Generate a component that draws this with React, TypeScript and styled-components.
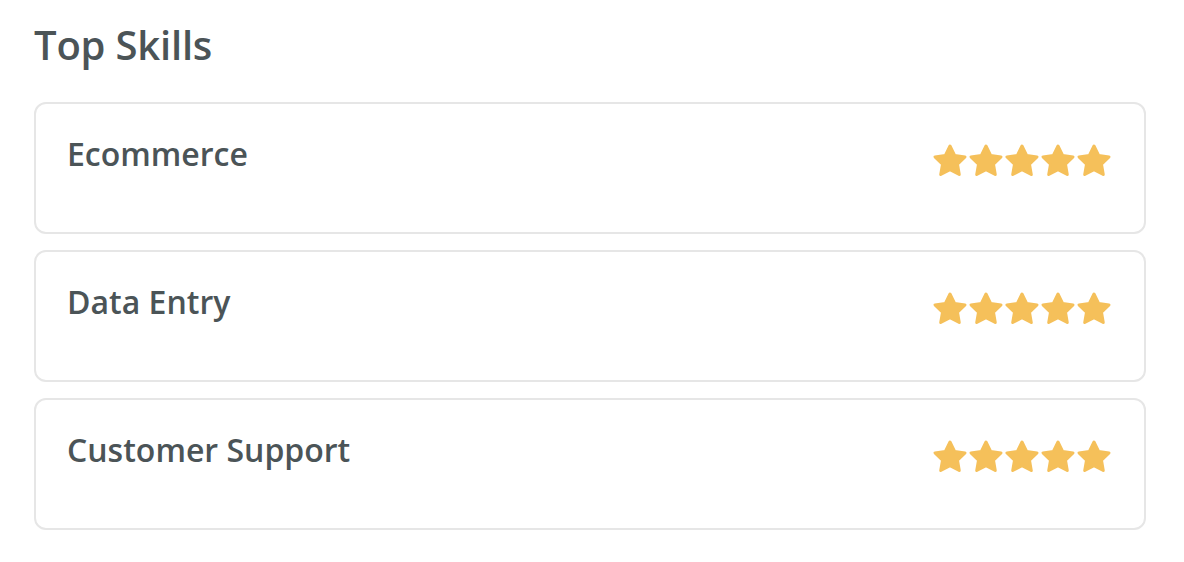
import React from 'react'
import styled, { createGlobalStyle } from 'styled-components'

const GlobalStyle = createGlobalStyle`
  html, body {
    margin: 0;
    padding: 0;
    background: #ffffff;
  }
  body {
    font-family: 'Open Sans', 'Noto Sans', sans-serif;
  }
`

const Section = styled.section`
  padding: 17px 38px 20px 34px;
  color: #4b5457;
`

const Title = styled.h2`
  margin: 0 0 30px;
  font-size: 40px;
  font-weight: 600;
  line-height: normal;
  letter-spacing: -0.2px;
`

const List = styled.div`
  display: flex;
  flex-direction: column;
  gap: 16px;
`

const Card = styled.div`
  box-sizing: border-box;
  height: 132px;
  display: flex;
  align-items: flex-start;
  justify-content: space-between;
  padding: 28px 32px 0 31px;
  border: 2px solid #e6e6e6;
  border-radius: 12px;
  background: #fff;
`

const SkillName = styled.div`
  font-size: 32px;
  font-weight: 600;
  line-height: normal;
`

const Stars = styled.div`
  display: flex;
  margin-top: 11px;
`

const StarIcon = ({ color = '#f5c05a' }: { color?: string }) => (
  <svg width="36" height="36" viewBox="0 0 24 24">
    <polygon
      points="12,2 15.09,8.26 22,9.27 17,14.14 18.18,21.02 12,17.77 5.82,21.02 7,14.14 2,9.27 8.91,8.26"
      fill={color}
      stroke={color}
      strokeWidth="2"
      strokeLinejoin="round"
    />
  </svg>
)

const skills = [
  { name: 'Ecommerce', rating: 5 },
  { name: 'Data Entry', rating: 5 },
  { name: 'Customer Support', rating: 5 },
]

const App = () => (
  <>
    <GlobalStyle />
    <Section>
      <Title>Top Skills</Title>
      <List>
        {skills.map((s) => (
          <Card key={s.name}>
            <SkillName>{s.name}</SkillName>
            <Stars>
              {Array.from({ length: s.rating }).map((_, i) => (
                <StarIcon key={i} />
              ))}
            </Stars>
          </Card>
        ))}
      </List>
    </Section>
  </>
)

export default App
